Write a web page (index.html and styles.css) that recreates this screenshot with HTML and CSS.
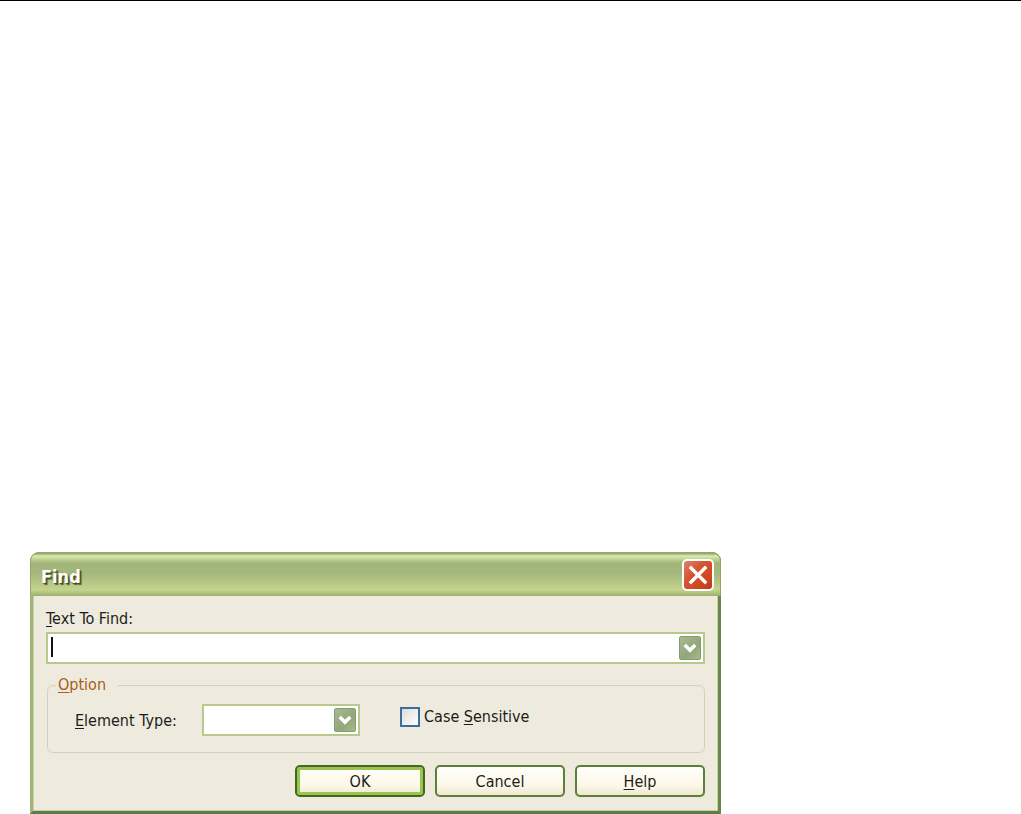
FILE: index.html
```html
<!DOCTYPE html>
<html lang="en">
<head>
<meta charset="utf-8">
<title>Find</title>
<link rel="stylesheet" href="styles.css">
</head>
<body>
<main class="page">
  <form class="dialog" role="dialog" aria-labelledby="dialog-title">
    <header class="titlebar">
      <h1 class="title" id="dialog-title">Find</h1>
      <button class="close" type="button" aria-label="Close">
        <svg viewBox="0 0 28 28" aria-hidden="true"><path d="M7 7 21 21M21 7 7 21" fill="none" stroke="#fff" stroke-width="3.4" stroke-linecap="square"/></svg>
      </button>
    </header>
    <div class="body">
      <label class="label" for="find-text"><u>T</u>ext To Find:</label>
      <div class="combo">
        <input class="combo-input" id="find-text" type="text" autocomplete="off">
        <span class="caret" aria-hidden="true"></span>
        <button class="arrow" type="button" aria-label="Show recent searches">
          <svg viewBox="0 0 22 25" aria-hidden="true"><path d="M5 9 11 15 17 9" fill="none" stroke="#fff" stroke-width="4"/></svg>
        </button>
      </div>
      <fieldset class="group">
        <legend class="legend"><u>O</u>ption</legend>
        <div class="options">
          <label class="label type-label" for="element-type"><u>E</u>lement Type:</label>
          <div class="combo type-combo">
            <select class="combo-select" id="element-type"><option></option></select>
            <span class="arrow select-arrow" aria-hidden="true">
              <svg viewBox="0 0 22 25"><path d="M5 9 11 15 17 9" fill="none" stroke="#fff" stroke-width="4"/></svg>
            </span>
          </div>
          <label class="check"><input class="checkbox" type="checkbox"><span>Case <u>S</u>ensitive</span></label>
        </div>
      </fieldset>
      <div class="actions">
        <button class="button primary" type="submit">OK</button>
        <button class="button" type="button">Cancel</button>
        <button class="button" type="button"><u>H</u>elp</button>
      </div>
    </div>
  </form>
</main>
</body>
</html>
```
FILE: styles.css
```css
* { box-sizing: border-box; }

body {
  margin: 0;
  background: #fff;
  color: #1c1c1a;
  font: 16px/20px "DejaVu Sans Condensed", Tahoma, "DejaVu Sans", sans-serif;
}

.page {
  display: flex;
  flex-direction: column;
  justify-content: flex-end;
  min-height: 100vh;
  padding-left: 30px;
  border-top: 1px solid #000;
}

.dialog {
  width: 100%;
  max-width: 691px;
  border: solid;
  border-width: 0 3px 3px;
  border-color: #5c7c49 #67874f #5c7c49 #a0b57e;
  border-radius: 9px 9px 0 0;
  background: #a9bf7e;
}

.titlebar {
  display: flex;
  align-items: center;
  justify-content: space-between;
  height: 44px;
  margin: 0 -3px;
  padding: 2px 6px 0 10px;
  border: 1px solid #91a868;
  border-bottom-color: #9db56c;
  border-radius: 9px 9px 0 0;
  background: linear-gradient(#879d62 0, #dfe9b5 3px, #c5d491 6px, #a2b579 10px, #a5b77d 20px, #b7c886 30px, #c5d38e 37px, #9fb570 42px);
}

.title {
  margin: 0;
  padding-top: 4px;
  color: #fff;
  font: bold 18px/24px "DejaVu Sans Condensed", "Trebuchet MS", "DejaVu Sans", sans-serif;
  text-shadow: 1px 1px 1px #3f4c20, 2px 2px 1px #56652f;
}

.close {
  width: 32px;
  height: 32px;
  padding: 0;
  border: 2px solid #fff;
  border-radius: 5px;
  background: linear-gradient(135deg, #e08268, #d4532f 40%, #cf4520 75%, #b53a1b);
}

.close svg, .arrow svg { display: block; width: 100%; height: 100%; }

.body {
  padding: 13px 12px;
  border: solid #c5d29a;
  border-width: 0 1px 1px;
  background: #eeebde;
}

.label { display: block; }

u { text-underline-offset: 2px; text-decoration-thickness: 1px; text-decoration-skip-ink: none; }

.combo {
  position: relative;
  display: flex;
  height: 32px;
  margin-top: 3px;
  padding: 2px;
  border: 2px solid #b7ca8c;
  background: #fff;
}

.combo-input, .combo-select {
  flex: 1;
  min-width: 0;
  padding: 0 4px;
  border: 0;
  outline: 0;
  appearance: none;
  background: transparent;
  font: inherit;
}

.caret {
  position: absolute;
  top: 3px;
  left: 3px;
  width: 2px;
  height: 20px;
  background: #111;
}

.arrow {
  width: 22px;
  height: 100%;
  padding: 0;
  border: 1px solid #839c72;
  border-radius: 2px;
  background: linear-gradient(135deg, #aaba91, #91a67a 60%, #a8bb85);
}

.select-arrow { pointer-events: none; }

.group {
  min-width: 0;
  margin: 11px 0 0 1px;
  padding: 9px 0 16px 27px;
  border: 1px solid #d3d1bd;
  border-radius: 6px;
}

.legend {
  margin-left: -19px;
  padding: 0 12px 0 2px;
  color: #a85c1c;
}

.options { display: flex; align-items: center; }

.type-label { width: 127px; padding-top: 2px; }

.type-combo { width: 158px; margin: 0; }

.check {
  display: flex;
  align-items: center;
  gap: 4px;
  margin: 0 0 6px 40px;
}

.checkbox {
  width: 20px;
  height: 20px;
  margin: 0;
  border: 2px solid #3b6d9f;
  appearance: none;
  background: linear-gradient(135deg, #dcdcda, #fff);
}

.checkbox:checked { background: #2d639b; }

.actions {
  display: flex;
  justify-content: flex-end;
  gap: 10px;
  margin-top: 12px;
}

.button {
  width: 130px;
  height: 32px;
  padding: 2px 0 0;
  border: 2px solid #5b803a;
  border-radius: 5px;
  background: linear-gradient(#fffffa, #fcf8e8 65%, #f1e7d2);
  color: #1c1c1a;
  font: inherit;
}

.primary {
  border-color: #42691f;
  box-shadow: inset 0 0 0 3px #9ac450;
}
```
